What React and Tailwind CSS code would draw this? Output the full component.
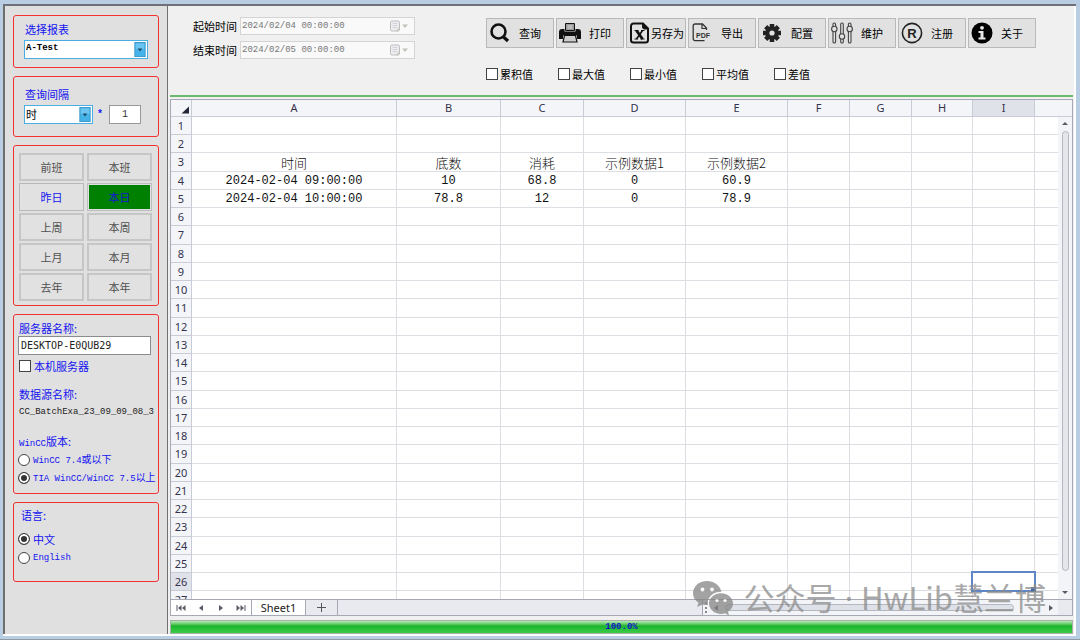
import React, { useState } from "react";

const SANS = "font-['Noto_Sans','Noto_Sans_CJK_SC',sans-serif]";
const MONO = "font-['Liberation_Mono','Noto_Sans_CJK_SC',monospace]";

function Group({ className = "", children }) {
  return (
    <section className={`flex flex-col rounded-[3px] border border-[#f53030] ${className}`}>
      {children}
    </section>
  );
}

function Heading({ htmlFor, className = "", children }) {
  return (
    <label htmlFor={htmlFor} className={`block h-4 pl-px text-[11px] leading-4 text-[#1414f0] ${className}`}>
      {children}
    </label>
  );
}

function Dropdown({ id, value, className = "", textClass }) {
  return (
    <div className={`relative h-[19px] ${className}`}>
      <select
        id={id}
        defaultValue={value}
        className={`block h-full w-full appearance-none border border-[#4aaee4] bg-white pl-px pb-px text-black outline-none ${textClass}`}
      >
        <option>{value}</option>
      </select>
      <svg
        viewBox="0 0 12 16"
        className="pointer-events-none absolute right-[2px] top-[2px] h-[15px] w-3"
        aria-hidden="true"
      >
        <rect x="0.5" y="0.5" width="11" height="15" fill="#45b3ea" stroke="#3a96c9" />
        <rect x="1.5" y="1.5" width="9" height="6" fill="#6cc4f0" />
        <path d="M3.5 7h5L6 10z" fill="#1c4a68" />
      </svg>
    </div>
  );
}

const BOX = "size-3 shrink-0 appearance-none border border-[#444] bg-white checked:bg-[#333] checked:shadow-[inset_0_0_0_2px_white]";

function Radio({ name, checked, onChange, className = "", children }) {
  return (
    <label className={`flex h-4 items-center gap-[3px] whitespace-nowrap leading-4 text-[#1414f0] ${className}`}>
      <input type="radio" name={name} checked={checked} onChange={onChange} className={`${BOX} rounded-full`} />
      {children}
    </label>
  );
}

const PERIODS = ["前班", "本班", "昨日", "本日", "上周", "本周", "上月", "本月", "去年", "本年"];

function periodClass(name) {
  if (name === "本日") return "border border-[#bdbdbd] bg-[#008000] text-[#1414d0] shadow-[inset_0_0_0_1px_#e0e0e0]";
  if (name === "昨日") return "border border-[#b9b9b9] bg-[#e1e1e1] text-[#1414f0]";
  return "border-2 border-[#c6c6c6] bg-[#e1e1e1] text-[#505050]";
}

function Sidebar() {
  const [version, setVersion] = useState("tia");
  const [lang, setLang] = useState("zh");
  return (
    <aside className="flex w-[165px] shrink-0 flex-col gap-2 border-r border-l-2 border-r-[#6f6f6f] border-l-[#6f6f6f] bg-[#e0e0e0] px-2 pt-[9px]">
      <Group className="px-[10px] pt-[5px] pb-2">
        <Heading htmlFor="report">选择报表</Heading>
        <Dropdown id="report" value="A-Test" className="mt-[3px]" textClass={`${MONO} text-[9px] font-bold`} />
      </Group>

      <Group className="px-[10px] pt-[9px] pb-3">
        <Heading htmlFor="unit">查询间隔</Heading>
        <div className="mt-[3px] flex items-center">
          <Dropdown id="unit" value="时" className="w-[69px]" textClass="text-[11px]" />
          <span className={`${MONO} w-4 pl-1 text-[10px] font-bold text-[#1414f0]`}>*</span>
          <input
            aria-label="间隔数"
            defaultValue="1"
            className={`${MONO} h-[19px] w-8 border border-[#999] bg-white text-center text-[10px] text-[#333]`}
          />
        </div>
      </Group>

      <Group className="pt-[7px] pr-[6px] pb-1 pl-[5px]">
        <div className="grid grid-cols-2 gap-x-[3px] gap-y-[2px]">
          {PERIODS.map((p) => (
            <button key={p} type="button" className={`h-7 text-[11px] leading-4 ${periodClass(p)}`}>
              {p}
            </button>
          ))}
        </div>
      </Group>

      <Group className="pt-[5px] pb-[7px] pl-1">
        <Heading htmlFor="server">服务器名称:</Heading>
        <input
          id="server"
          defaultValue="DESKTOP-E0QUB29"
          className="mr-[7px] h-[19px] border border-[#8c8c8c] bg-white pl-[2px] font-['DejaVu_Sans_Mono',monospace] text-[10px] text-[#222]"
        />
        <label className="mt-[3px] flex h-4 items-center gap-[3px] pl-px text-[11px] leading-4 text-[#1414f0]">
          <input type="checkbox" className={BOX} />
          本机服务器
        </label>
        <Heading className="mt-3">数据源名称:</Heading>
        <div className={`${MONO} mt-[2px] h-4 pl-px text-[9px] leading-4 whitespace-nowrap text-[#222]`}>
          CC_BatchExa_23_09_09_08_3
        </div>
        <Heading className="mt-[13px]">
          <span className={`${MONO} text-[9px]`}>WinCC</span>版本:
        </Heading>
        <Radio name="version" checked={version === "wincc"} onChange={() => setVersion("wincc")} className="mt-[3px] text-[10px]">
          <span>
            <span className={`${MONO} text-[9px]`}>WinCC 7.4</span>或以下
          </span>
        </Radio>
        <Radio name="version" checked={version === "tia"} onChange={() => setVersion("tia")} className="mt-[2px] text-[10px]">
          <span>
            <span className={`${MONO} text-[9px]`}>TIA WinCC/WinCC 7.5</span>以上
          </span>
        </Radio>
      </Group>

      <Group className="pt-1 pb-[15px] pl-1">
        <div className="h-4 pl-[3px] text-[11px] leading-4 text-[#1414f0]">语言:</div>
        <Radio name="lang" checked={lang === "zh"} onChange={() => setLang("zh")} className="mt-2 text-[11px]">
          中文
        </Radio>
        <Radio name="lang" checked={lang === "en"} onChange={() => setLang("en")} className={`${MONO} mt-[3px] text-[9px]`}>
          English
        </Radio>
      </Group>
    </aside>
  );
}

function DateField({ id, label, value }) {
  return (
    <div className="flex h-[18px] items-center">
      <label htmlFor={id} className="w-[47px] text-[11px] leading-4 whitespace-nowrap text-black">
        {label}
      </label>
      <div className="flex h-full w-[175px] items-center border border-[#d4d4d4] bg-[#f9f9f9]">
        <input
          id={id}
          defaultValue={value}
          disabled
          className={`${MONO} h-full min-w-0 flex-1 bg-transparent pl-px text-[9px] text-[#777]`}
        />
        <svg viewBox="0 0 20 12" className="mr-1 h-3 w-5" aria-hidden="true">
          <rect x="0.5" y="1" width="9" height="10" rx="1.5" fill="#eeeef0" stroke="#c0bcbc" />
          <path d="M2.5 3.5h5M2.5 5.5h5M2.5 7.5h5" stroke="#d3d3dc" />
          <path d="M6.5 11l3-3" stroke="#b5b0b0" />
          <path d="M12 4.5h6L15 8z" fill="#bfc2b4" />
        </svg>
      </div>
    </div>
  );
}

const ICONS = {
  search: (
    <>
      <circle cx="9.5" cy="9.5" r="7" fill="none" stroke="#111" strokeWidth="2.6" />
      <path d="M14.5 15l4.5 4" stroke="#111" strokeWidth="3.2" />
    </>
  ),
  print: (
    <>
      <path d="M6.5 1.500h9v7h-9z" fill="#999" stroke="#111" />
      <path d="M8.500 4h5M8.500 6h5" stroke="#ddd" />
      <path d="M3 7h2.500v2.500h11V7H19a3 3 0 0 1 3 3v7h-4v-3.500H4V17H0v-7a3 3 0 0 1 3-3z" fill="#111" />
      <path d="M5.500 13.500h11l1.500 6.500h-14z" fill="#ccc" stroke="#111" strokeWidth="1.200" />
    </>
  ),
  excel: (
    <>
      <path d="M4.500 1.500h9.500l5 5v11.500a2.500 2.500 0 0 1-2.500 2.500h-12A2.500 2.500 0 0 1 2 18V4a2.500 2.500 0 0 1 2.500-2.500z" fill="none" stroke="#111" strokeWidth="2" />
      <path d="M13.500 1.500v3.500a2 2 0 0 0 2 2H19" fill="#111" stroke="#111" />
      <path d="M7.500 8.500l6 8.500" stroke="#111" strokeWidth="2.800" />
      <path d="M13.500 8.500l-6 8.500" stroke="#111" strokeWidth="1.600" />
      <path d="M5.500 8.500h4M12 8.500h3.500M5.500 17h3.500M11.500 17h4" stroke="#111" strokeWidth="1" />
    </>
  ),
  pdf: (
    <>
      <path d="M15.500 8V6l-4-4H4a1.800 1.800 0 0 0-1.800 1.800v13A1.800 1.800 0 0 0 4 18.600h9.500" fill="none" stroke="#333" strokeWidth="1.300" />
      <path d="M11 2v4.500h4.500" fill="none" stroke="#333" strokeWidth="1.200" />
      <text x="5" y="16" fontSize="7" fontWeight="700" fontFamily="Liberation Sans" fill="#333">PDF</text>
    </>
  ),
  gear: (
    <>
      <g stroke="#222" strokeWidth="4.500">
        <path d="M11 2v18M2 11h18M4.700 4.700l12.600 12.600M17.300 4.700L4.700 17.300" />
      </g>
      <circle cx="11" cy="11" r="6.800" fill="#222" />
      <circle cx="11" cy="11" r="2.600" fill="#e1e1e1" />
    </>
  ),
  sliders: (
    <g fill="#e1e1e1" stroke="#444" strokeWidth="1.100">
      <rect x="2" y="1" width="2.600" height="20" rx="1.300" />
      <rect x="9.700" y="1" width="2.600" height="20" rx="1.300" />
      <rect x="17.400" y="1" width="2.600" height="20" rx="1.300" />
      <circle cx="3.300" cy="7" r="2.700" />
      <circle cx="11" cy="14.500" r="2.700" />
      <circle cx="18.700" cy="7" r="2.700" />
    </g>
  ),
  registered: (
    <>
      <circle cx="11" cy="11" r="9.600" fill="none" stroke="#222" strokeWidth="1.600" />
      <text x="11" y="15.500" textAnchor="middle" fontSize="13" fontWeight="700" fontFamily="Liberation Sans" fill="#222">R</text>
    </>
  ),
  info: (
    <>
      <circle cx="11" cy="11" r="10.500" fill="#000" />
      <circle cx="11" cy="5.800" r="1.900" fill="#e8e8e8" />
      <path d="M7.500 9h5v6.500h2v2h-7v-2h2v-4.500h-2z" fill="#e8e8e8" />
    </>
  ),
};

const ACTIONS = [
  ["查询", "search"],
  ["打印", "print"],
  ["另存为", "excel"],
  ["导出", "pdf"],
  ["配置", "gear"],
  ["维护", "sliders"],
  ["注册", "registered"],
  ["关于", "info"],
];

function Toolbar() {
  return (
    <div className="flex h-[89px] shrink-0 pt-[11px] pl-[23px]">
      <div className="flex shrink-0 flex-col gap-[6px]">
        <DateField id="start" label="起始时间" value="2024/02/04 00:00:00" />
        <DateField id="end" label="结束时间" value="2024/02/05 00:00:00" />
      </div>
      <div className="ml-[71px] pt-px">
        <div className="flex gap-[2px]">
          {ACTIONS.map(([label, icon]) => (
            <button
              key={label}
              type="button"
              className={`flex h-[30px] items-center border border-[#b9b9b9] bg-[#e1e1e1] pl-[2px] text-[11px] leading-4 whitespace-nowrap text-black ${
                icon === "excel" ? "w-[60px]" : "w-[68px]"
              }`}
            >
              <svg viewBox="0 0 22 22" className="size-[22px] shrink-0" aria-hidden="true">
                {ICONS[icon]}
              </svg>
              <span className={icon === "excel" ? "" : "flex-1 pr-1 text-center"}>{label}</span>
            </button>
          ))}
        </div>
        <div className="mt-[18px] flex">
          {["累积值", "最大值", "最小值", "平均值", "差值"].map((t) => (
            <label key={t} className="flex h-4 w-[72px] items-center gap-[2px] text-[11px] leading-4 text-black">
              <input type="checkbox" className={BOX} />
              {t}
            </label>
          ))}
        </div>
      </div>
    </div>
  );
}

const COLUMNS = [
  ["A", "w-[205px]"],
  ["B", "w-[104px]"],
  ["C", "w-[83px]"],
  ["D", "w-[102px]"],
  ["E", "w-[102px]"],
  ["F", "w-[62px]"],
  ["G", "w-[62px]"],
  ["H", "w-[61px]"],
  ["I", "w-[62px]"],
];

const CELLS = {
  3: ["时间", "底数", "消耗", "示例数据1", "示例数据2"],
  4: ["2024-02-04 09:00:00", "10", "68.8", "0", "60.9"],
  5: ["2024-02-04 10:00:00", "78.8", "12", "0", "78.9"],
};

const HEAD = "border-r border-b border-[#c9ccd6] font-normal text-[#33334d]";
const headBg = (active) => (active ? "bg-[#e0e2e9]" : "bg-[#f4f5f8]");

function Sheet() {
  const rows = Array.from({ length: 27 }, (_, i) => i + 1);
  return (
    <table className={`${SANS} min-w-0 flex-1 table-fixed border-separate border-spacing-0 text-[11px] leading-4`}>
      <thead>
        <tr className="h-[17px]">
          <th className={`${HEAD} ${headBg(false)} w-[21px] p-0`}>
            <svg viewBox="0 0 20 16" className="block h-4 w-5" aria-label="全选">
              <path d="M18 6.500v7h-7.500z" fill="#26263a" />
            </svg>
          </th>
          {COLUMNS.map(([name, width]) => (
            <th key={name} className={`${HEAD} ${headBg(name === "I")} ${width} p-0`}>
              {name}
            </th>
          ))}
          <th className="border-b border-[#c9ccd6] bg-[#f4f5f8] p-0" />
        </tr>
      </thead>
      <tbody>
        {rows.map((n) => (
          <tr key={n} className={n % 4 === 3 ? "h-[19px]" : "h-[18px]"}>
            <th className={`${HEAD} ${headBg(n === 26)} p-0`}>{n}</th>
            {COLUMNS.map(([name], c) => (
              <td
                key={name}
                className={`border-r border-b border-[#dcdee3] p-0 pt-px text-center whitespace-nowrap text-[#111] ${
                  n === 3
                    ? "font-['Noto_Sans_CJK_SC',sans-serif] text-[13px] font-light"
                    : "font-['Liberation_Mono',monospace] text-[12px]"
                } ${n === 26 && name === "I" ? "relative" : ""}`}
              >
                {CELLS[n]?.[c]}
                {n === 26 && name === "I" && (
                  <span className="absolute -inset-[2px] border-2 border-[#5f86c4]">
                    <span className="absolute -right-[2px] -bottom-[2px] size-[5px] bg-[#3f66a8]" />
                  </span>
                )}
              </td>
            ))}
            <td className="border-b border-[#dcdee3] p-0" />
          </tr>
        ))}
      </tbody>
    </table>
  );
}

function Tri({ d }) {
  return (
    <svg viewBox="0 0 10 8" className="h-2 w-[10px] shrink-0" aria-hidden="true">
      <path d={d} fill="#5a5a66" stroke="none" />
    </svg>
  );
}

const NAV = [
  ["第一张", "M0.500 1h1v6h-1zM5.500 1v6l-3.500-3zM9.500 1v6L6 4z"],
  ["上一张", "M7 1v6L3 4z"],
  ["下一张", "M3 1v6l4-3z"],
  ["最后一张", "M8.500 1h1v6h-1zM0.500 1v6L4 4zM4.500 1v6L8 4z"],
];

function TabBar() {
  return (
    <div className={`${SANS} flex h-4 shrink-0 border-t border-[#a6a9b4] bg-[#e8eaef] text-[11px] leading-[15px]`}>
      <div className="flex w-[81px] items-center justify-between border-r border-[#a6a9b4] bg-white px-[5px]">
        {NAV.map(([label, d]) => (
          <button key={label} type="button" aria-label={label} className="flex">
            <Tri d={d} />
          </button>
        ))}
      </div>
      <button type="button" className="w-[54px] border-r border-[#a6a9b4] bg-white text-[#222]">
        Sheet1
      </button>
      <button type="button" aria-label="新建工作表" className="flex w-8 items-center justify-center border-r border-[#a6a9b4]">
        <svg viewBox="0 0 9 9" className="size-[9px]" aria-hidden="true">
          <path d="M4.500 0v9M0 4.500h9" stroke="#555" />
        </svg>
      </button>
      <div className="flex-1" />
      <div className="flex w-[356px] items-center gap-1 border-l border-[#a6a9b4] bg-[#f3f4f7] px-[2px]">
        <span className="h-[11px] border-l-2 border-dotted border-[#888]" />
        <Tri d="M7 1v6L3 4z" />
        <div className="flex-1">
          <div className="mr-7 h-[7px] rounded-full border border-[#b4b7c2] bg-[#dfe1e8]" />
        </div>
        <Tri d="M3 1v6l4-3z" />
      </div>
      <div className="w-[14px]" />
    </div>
  );
}

function Watermark() {
  return (
    <div className="pointer-events-none absolute right-[30px] bottom-[20px] flex items-center gap-[10px] text-[#8c8c8c] opacity-75">
      <svg viewBox="0 0 42 36" className="h-9 w-[42px]" aria-hidden="true">
        <path
          d="M15 1C7 1 1 6.500 1 13.200c0 4 2 7.200 5.500 9.500L5.200 27l5.300-2.500c1.500.400 3 .600 4.500.600h1C14.500 17.500 21 11.500 29.500 11.700 28 5.500 22 1 15 1z"
          fill="#858585"
        />
        <path
          d="M41 23.500c0-5.800-5.500-10.300-12-10.300s-12 4.500-12 10.300 5.500 10.400 12 10.400c1.300 0 2.700-.200 4-.600l4 2.200-1-3.700c3-2 5-5 5-8.300z"
          fill="#858585"
        />
        <g fill="#fff">
          <circle cx="10.500" cy="9.500" r="1.900" />
          <circle cx="20" cy="9.500" r="1.900" />
          <circle cx="25" cy="20.500" r="1.600" />
          <circle cx="33" cy="20.500" r="1.600" />
        </g>
      </svg>
      <span className="font-['Noto_Sans_CJK_SC',sans-serif] text-[31px] leading-9 whitespace-nowrap">
        公众号<span className={SANS}> · </span>HwLib慧兰博
      </span>
    </div>
  );
}

export default function App() {
  return (
    <div className="flex h-screen w-full flex-col border-b border-[#8f9aa8] bg-[#b9cde3] pt-1 pr-1 pb-[3px] pl-[3px] font-['Noto_Sans_CJK_SC',sans-serif]">
      <div className="relative flex min-h-0 flex-1 border-t-2 border-[#70707a] bg-white pr-[2px] pb-[2px]">
        <Sidebar />
        <main className="flex min-w-0 flex-1 flex-col bg-[#f0f0f0] pr-px pl-[2px]">
          <Toolbar />
          <div className="mb-[2px] h-[2px] shrink-0 bg-[#6cb86c]" />
          <div className="flex min-h-0 flex-1 flex-col border border-[#a6a9b4] bg-white">
            <div className="flex min-h-0 flex-1 overflow-hidden">
              <Sheet />
              <div className="flex h-full w-[14px] shrink-0 flex-col bg-[#f3f4f7]">
                <div className="h-[17px] shrink-0 border-b border-[#c9ccd6]" />
                <div className="flex min-h-0 flex-1 flex-col items-center gap-1 py-[2px]">
                  <Tri d="M2 6h6L5 3z" />
                  <div className="w-[7px] flex-1 rounded-full border border-[#b4b7c2] bg-[#e4e6ec]" />
                  <div className="pt-[14px]">
                    <Tri d="M2 2h6L5 5z" />
                  </div>
                </div>
              </div>
            </div>
            <TabBar />
          </div>
          <div
            role="progressbar"
            aria-valuenow={100}
            className={`${MONO} mt-1 h-[14px] shrink-0 border border-[#a8b0a8] bg-linear-to-b from-[#b4ecb4] via-[#18b62c] via-40% to-[#3ccc48] text-center text-[9px] leading-3 font-bold text-[#1414c8]`}
          >
            100.0%
          </div>
        </main>
        <Watermark />
      </div>
    </div>
  );
}
